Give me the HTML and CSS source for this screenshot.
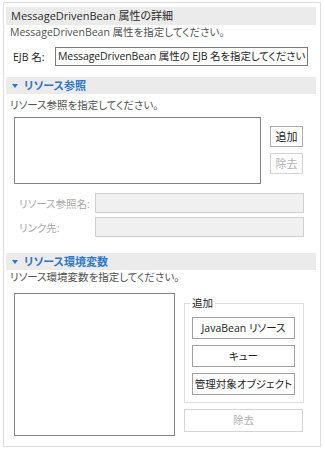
FILE: index.html
```html
<!DOCTYPE html>
<html lang="ja">
<head>
    <meta charset="UTF-8">
    <meta name="viewport" content="width=device-width, initial-scale=1.0">
    <link rel="stylesheet" href="styles.css">
    <title>MessageDrivenBean 属性の詳細</title>
</head>
<body>
<div class="panel">
    <div class="head plain">MessageDrivenBean 属性の詳細</div>
    <div class="desc">MessageDrivenBean 属性を指定してください。</div>
    <div class="ejb-row">
        <span class="lbl">EJB 名:</span>
        <div class="text">MessageDrivenBean 属性の EJB 名を指定してください</div>
    </div>

    <div class="head sec h2"><span class="tri"></span>リソース参照</div>
    <div class="desc d2">リソース参照を指定してください。</div>
    <div class="ref-row">
        <div class="list ref-list"></div>
        <div class="side-btns">
            <div class="btn small">追加</div>
            <div class="btn small off">除去</div>
        </div>
    </div>
    <div class="field f1">
        <span class="lbl dim">リソース参照名:</span>
        <div class="text off"></div>
    </div>
    <div class="field f2">
        <span class="lbl dim">リンク先:</span>
        <div class="text off"></div>
    </div>

    <div class="head sec h3"><span class="tri"></span>リソース環境変数</div>
    <div class="desc">リソース環境変数を指定してください。</div>
    <div class="env-row">
        <div class="list env-list"></div>
        <div class="env-side">
            <div class="group">
                <span class="legend">追加</span>
                <div class="btn wide">JavaBean リソース</div>
                <div class="btn wide">キュー</div>
                <div class="btn wide">管理対象オブジェクト</div>
            </div>
            <div class="btn remove off">除去</div>
        </div>
    </div>
</div>
</body>
</html>
```

FILE: styles.css
```css
html
{
    background-color: #ffffff;
}

body
{
    margin: 0;
    font-family: "Open Sans", "Noto Sans CJK JP", sans-serif;
    font-size: 10.5px;
    font-feature-settings: "palt";
    color: #1e1e1e;
}

.panel
{
    box-sizing: border-box;
    width: 318px;
    height: 445px;
    margin: 2px 0 0 3px;
    padding: 4px 4px 0 1px;
    border: 1px solid #dedede;
}

.head
{
    margin-left: 1px;
    height: 18px;
    line-height: 18px;
    padding-left: 5px;
    background-color: #ebebeb;
    color: #2b2b2b;
    font-size: 11px;
    white-space: nowrap;
}

.head.sec
{
    color: #2d78c8;
    font-weight: bold;
    padding-left: 6px;
    display: flex;
    align-items: center;
}

.h2
{
    margin-top: 11px;
    height: 17px;
}

.h3
{
    margin-top: 16px;
    height: 17px;
}

.tri
{
    width: 0;
    height: 0;
    border-left: 3.5px solid transparent;
    border-right: 3.5px solid transparent;
    border-top: 4px solid #2d78c8;
    margin-right: 6px;
}

.desc
{
    padding-left: 5px;
    line-height: 14px;
    color: #505050;
    white-space: nowrap;
}

.d2
{
    margin-top: 4px;
}

.lbl
{
    white-space: nowrap;
}

.dim
{
    color: #a8a8a8;
}

.text
{
    box-sizing: border-box;
    height: 19px;
    line-height: 17px;
    border: 1px solid #7a7a7a;
    padding-left: 3px;
    overflow: hidden;
    white-space: nowrap;
    background-color: #ffffff;
}

.text.off
{
    border-color: #cfcfcf;
    background-color: #f0f0f0;
}

.ejb-row
{
    display: flex;
    align-items: center;
    margin-top: 8px;
    padding-left: 8px;
}

.ejb-row .lbl
{
    width: 35px;
}

.ejb-row .text
{
    width: 253px;
    margin-left: 7px;
    padding-left: 2px;
    letter-spacing: -0.1px;
}

.ref-row
{
    display: flex;
    margin-top: 5px;
    padding-left: 9px;
}

.list
{
    box-sizing: border-box;
    border: 1px solid #828282;
    background-color: #ffffff;
}

.ref-list
{
    width: 247px;
    height: 67px;
}

.side-btns
{
    display: flex;
    flex-direction: column;
    gap: 6px;
    margin-left: 9px;
    padding-top: 9px;
}

.btn
{
    box-sizing: border-box;
    border: 1px solid #adadad;
    background-color: #ffffff;
    text-align: center;
    white-space: nowrap;
}

.btn.off
{
    border-color: #d4d4d4;
    color: #b0b0b0;
}

.small
{
    width: 33px;
    height: 21px;
    line-height: 19px;
    font-size: 11px;
}

.field
{
    display: flex;
    align-items: center;
    padding-left: 14px;
}

.field .lbl
{
    width: 76px;
}

.field .text
{
    width: 209px;
    height: 20px;
}

.f1
{
    margin-top: 9px;
}

.f2
{
    margin-top: 4px;
}

.env-row
{
    display: flex;
    margin-top: 9px;
    padding-left: 9px;
}

.env-list
{
    width: 161px;
    height: 143px;
}

.env-side
{
    margin-left: 9px;
    padding-top: 10px;
}

.group
{
    position: relative;
    box-sizing: border-box;
    width: 120px;
    height: 100px;
    border: 1px solid #dcdcdc;
    padding: 13px 0 0 7px;
    display: flex;
    flex-direction: column;
    gap: 6px;
}

.legend
{
    position: absolute;
    top: -8px;
    left: 5px;
    padding: 0 2px;
    line-height: 14px;
    background-color: #ffffff;
}

.wide
{
    width: 103px;
    height: 22px;
    line-height: 20px;
    border-color: #a0a0a0;
}

.remove
{
    width: 119px;
    height: 23px;
    line-height: 21px;
    margin-top: 6px;
}
```
